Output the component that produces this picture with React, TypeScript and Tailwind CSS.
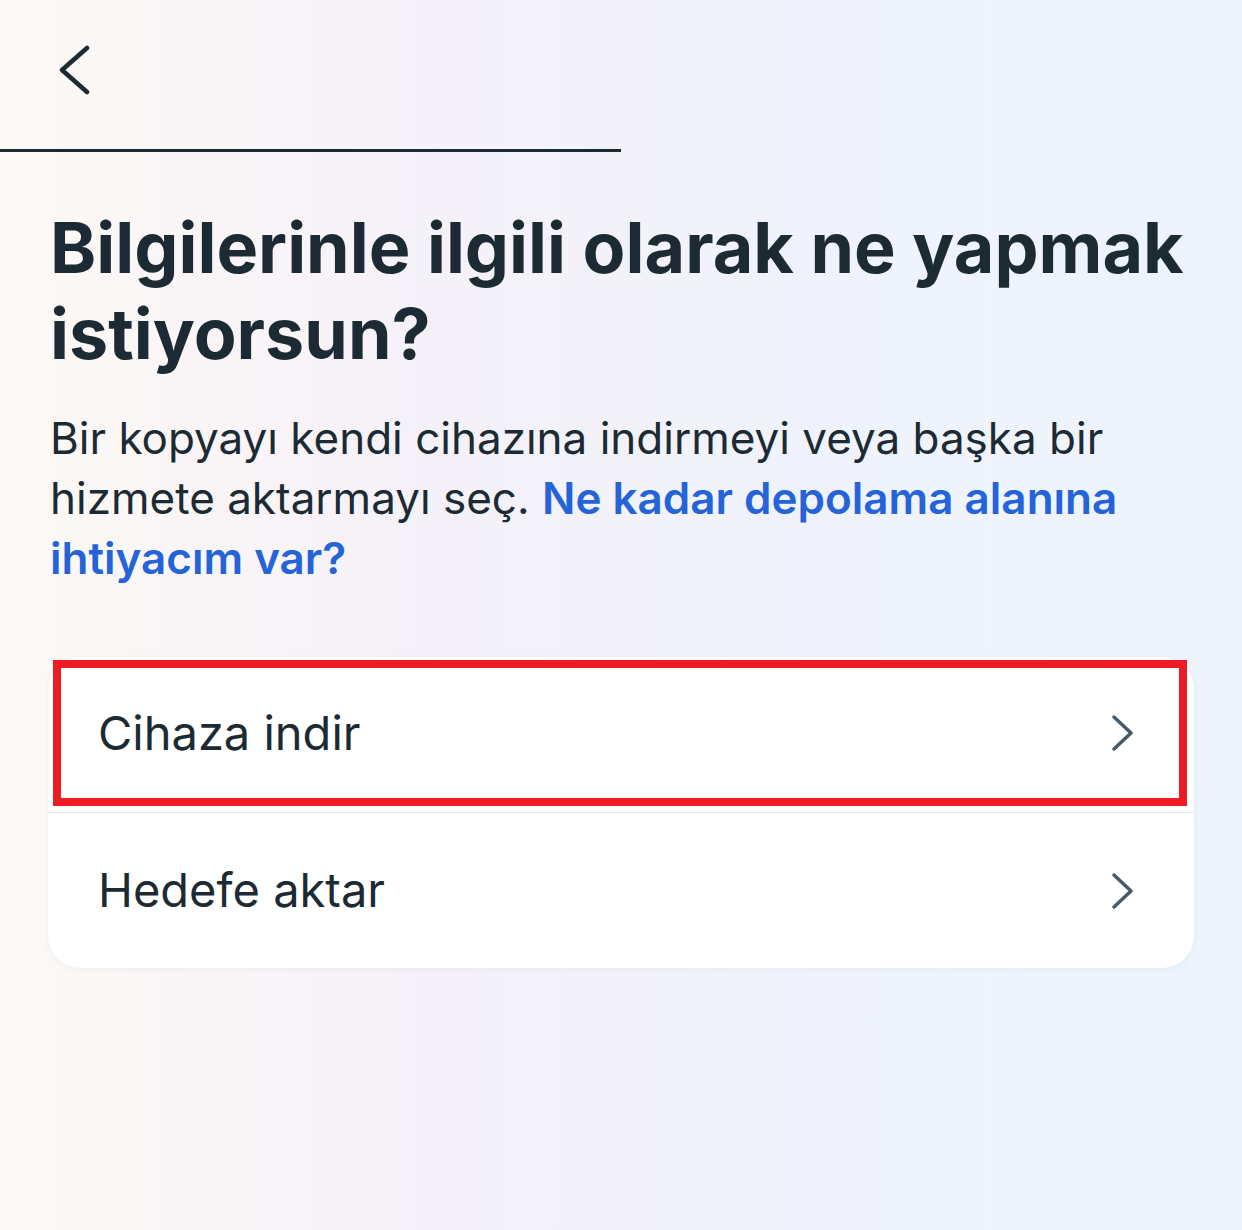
import React from 'react'

const FONT = "Inter, 'Noto Sans', sans-serif"

function BackChevron() {
  return (
    <svg width="34" height="52" viewBox="0 0 34 52" fill="none">
      <path d="M30 3 L5 25 L30 47" stroke="#1c2b33" strokeWidth="4.5" strokeLinecap="round" strokeLinejoin="round" />
    </svg>
  )
}

function RowChevron() {
  return (
    <svg width="26" height="38" viewBox="0 0 26 38" fill="none">
      <path d="M4 3 L21 19 L4 35" stroke="#465a69" strokeWidth="3.5" strokeLinecap="round" strokeLinejoin="round" />
    </svg>
  )
}

export default function App() {
  return (
    <div
      className="w-[1242px] h-[1230px] overflow-hidden bg-[linear-gradient(90deg,#fdf9f5_0%,#f5f1f9_35%,#eff3fc_70%,#edf4fd_100%)]"
      style={{ fontFamily: FONT }}
    >
      {/* Header */}
      <div className="h-[149px] pl-[57px] pt-[45px]">
        <BackChevron />
      </div>
      <div className="w-[621px] h-[3px] bg-[#1c2b33]" />

      <div className="px-[50px]">
        <h1 className="mt-[53px] text-[70px] leading-[86px] font-bold text-[#1c2b33]">
          Bilgilerinle ilgili olarak ne yapmak istiyorsun?
        </h1>
        <p className="mt-[31px] text-[44px] leading-[60px] text-[#1c2b33]">
          Bir kopyayı kendi cihazına indirmeyi veya başka bir hizmete aktarmayı seç.{' '}
          <span className="font-semibold text-[#2563d9]">Ne kadar depolama alanına ihtiyacım var?</span>
        </p>
      </div>

      {/* Options card */}
      <div className="mt-[69px] ml-[48px] w-[1146px] rounded-[32px] bg-white shadow-[0_1px_6px_rgba(30,40,80,0.05)]">
        <div className="h-[155px] pt-[3px] pl-[5px] pr-[7px] pb-[6px]">
          <div className="h-full border-[8px] border-[#ed1c24] flex items-center justify-between pl-[37px] pr-[43px]">
            <span className="text-[47px] text-[#1c2b33]">Cihaza indir</span>
            <RowChevron />
          </div>
        </div>
        <div className="h-px bg-[#e4e6eb]" />
        <div className="h-[155px] flex items-center justify-between pl-[50px] pr-[58px]">
          <span className="text-[47px] text-[#1c2b33]">Hedefe aktar</span>
          <RowChevron />
        </div>
      </div>
    </div>
  )
}
